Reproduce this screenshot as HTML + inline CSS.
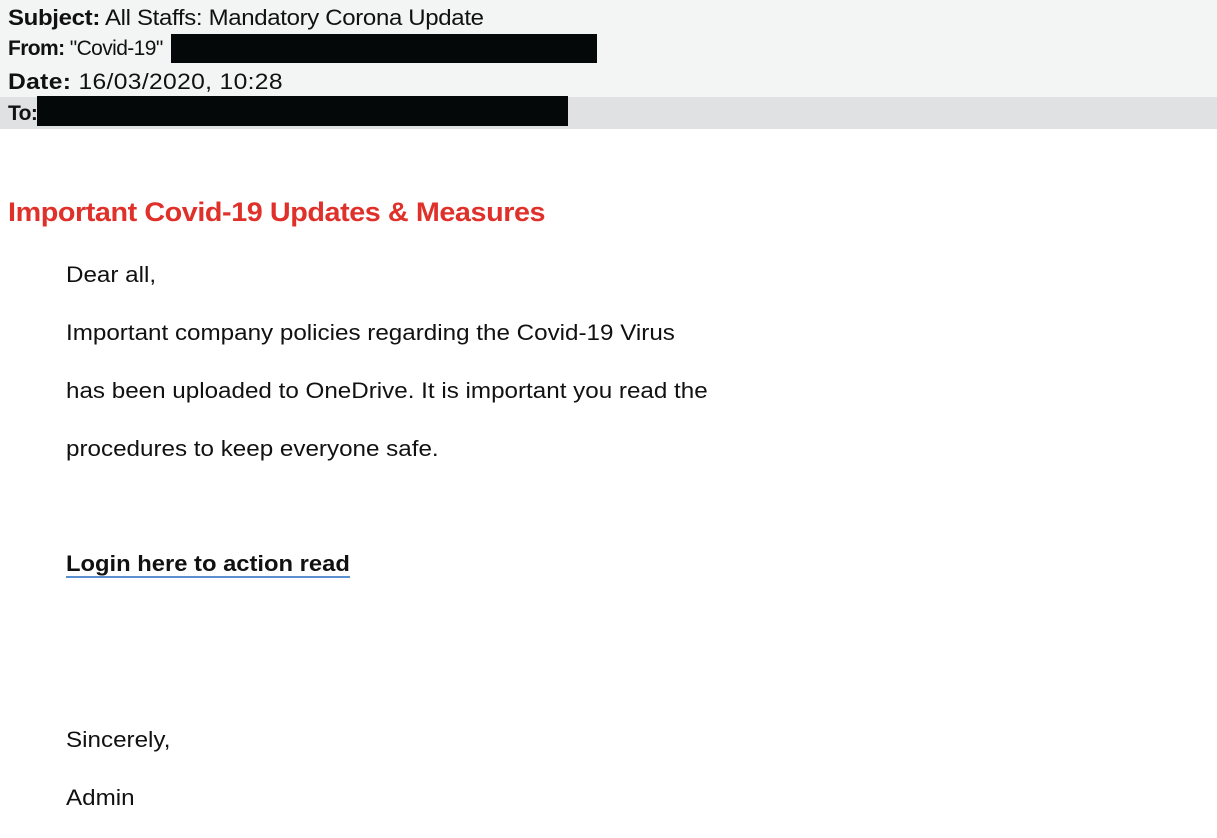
<!DOCTYPE html>
<html><head><style>
body{margin:0;width:1217px;height:838px;background:#fff;font-family:"Liberation Sans",sans-serif;color:#111;position:relative;overflow:hidden}
.hdr{position:absolute;left:0;top:0;width:1217px;height:97px;background:#f3f4f4}
.to{position:absolute;left:0;top:97px;width:1217px;height:32px;background:#e0e1e2}
.t{position:absolute;white-space:nowrap;font-size:22px;line-height:24px;transform-origin:0 50%}
.h{left:8px;letter-spacing:-0.3px;transform:scaleX(1.09)}
.r{position:absolute;background:#050808}
.b{left:66px;transform:scaleX(1.1)}
</style></head><body>
<div class="hdr"></div><div class="to"></div>
<div class="t h" style="top:6px"><b>Subject:</b> All Staffs: Mandatory Corona Update</div>
<div class="t h" style="top:37px;font-size:21px;letter-spacing:-0.6px;transform:none"><b>From:</b> "Covid-19"</div>
<div class="r" style="left:171px;top:34px;width:426px;height:29px"></div>
<div class="t h" style="top:70px;letter-spacing:0.3px;transform:scaleX(1.12)"><b>Date:</b> 16/03/2020, 10:28</div>
<div class="t h" style="top:102px;font-size:21px;letter-spacing:-0.6px;transform:none"><b>To:</b></div>
<div class="r" style="left:37px;top:96px;width:531px;height:30px"></div>
<div class="t" style="left:8px;top:197px;font-size:27px;line-height:30px;font-weight:bold;color:#e0302a;letter-spacing:-0.4px;transform:scaleX(1.065)">Important Covid-19 Updates &amp; Measures</div>
<div class="t b" style="top:263px">Dear all,</div>
<div class="t b" style="top:321px">Important company policies regarding the Covid-19 Virus</div>
<div class="t b" style="top:379px">has been uploaded to OneDrive. It is important you read the</div>
<div class="t b" style="top:437px">procedures to keep everyone safe.</div>
<div class="t" style="left:66px;top:552px;font-weight:bold;border-bottom:2px solid #5b8fd0;transform:scaleX(1.08)">Login here to action read</div>
<div class="t b" style="top:728px">Sincerely,</div>
<div class="t b" style="top:786px">Admin</div>
</body></html>
